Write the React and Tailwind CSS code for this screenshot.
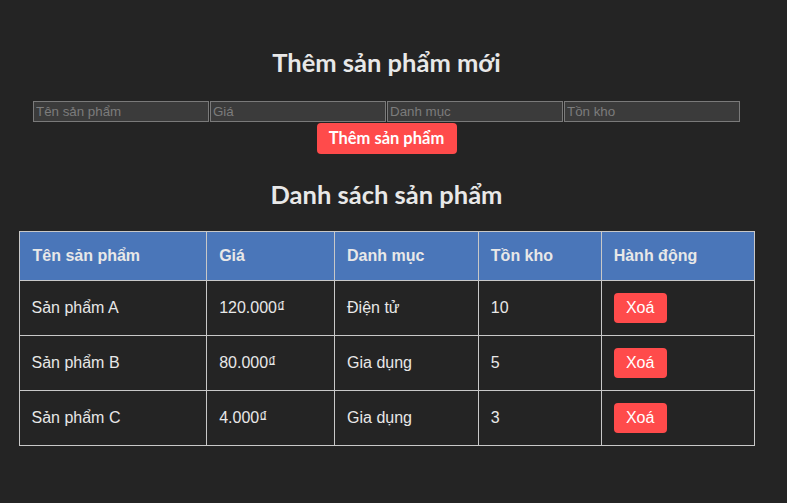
import React from 'react';

const products = [
  { name: 'Sản phẩm A', price: '120.000₫', category: 'Điện tử', stock: 10 },
  { name: 'Sản phẩm B', price: '80.000₫', category: 'Gia dụng', stock: 5 },
  { name: 'Sản phẩm C', price: '4.000₫', category: 'Gia dụng', stock: 3 },
];

const heading = "font-['Lato',sans-serif] font-bold text-[25.5px] leading-[36px] text-[#e8e8e8] text-center";

export default function App() {
  return (
    <div className="min-h-[503px] w-full bg-[#242424] text-[#e8e8e8] font-['Liberation_Sans',Arial,sans-serif]">
      <div className="w-[773px] flex flex-col items-center pt-[44px]">
        <h2 className={heading}>Thêm sản phẩm mới</h2>

        {/* Form */}
        <div className="mt-[21px] flex gap-px">
          {['Tên sản phẩm', 'Giá', 'Danh mục', 'Tồn kho'].map((p) => (
            <input
              key={p}
              placeholder={p}
              className="w-[176px] h-[21px] px-[2px] bg-[#3b3b3b] border border-[#7a7a7a] text-[13.33px] text-[#ddd] placeholder:text-[#7c7c7c] outline-none"
            />
          ))}
        </div>
        <button className="mt-[1px] w-[140px] h-[31px] rounded-[4px] bg-[#ff4b4b] text-white font-['Lato',sans-serif] font-bold text-[16.5px]">
          Thêm sản phẩm
        </button>

        <h2 className={`${heading} mt-[22px]`}>Danh sách sản phẩm</h2>

        {/* Table */}
        <table className="mt-[19px] w-[736px] border-collapse text-[16px]">
          <thead>
            <tr className="bg-[#4a76b9] h-[49px] text-left">
              <th className="w-[188px] border border-[#c8c8c8] px-[13px] font-bold">Tên sản phẩm</th>
              <th className="w-[128px] border border-[#c8c8c8] px-[12px] font-bold">Giá</th>
              <th className="w-[144px] border border-[#c8c8c8] px-[12px] font-bold">Danh mục</th>
              <th className="w-[123px] border border-[#c8c8c8] px-[12px] font-bold">Tồn kho</th>
              <th className="w-[153px] border border-[#c8c8c8] px-[12px] font-bold">Hành động</th>
            </tr>
          </thead>
          <tbody>
            {products.map((p) => (
              <tr key={p.name} className="h-[55px]">
                <td className="border border-[#c8c8c8] px-[12px]">{p.name}</td>
                <td className="border border-[#c8c8c8] px-[12px]">{p.price}</td>
                <td className="border border-[#c8c8c8] px-[12px]">{p.category}</td>
                <td className="border border-[#c8c8c8] px-[12px]">{p.stock}</td>
                <td className="border border-[#c8c8c8] px-[12px]">
                  <button className="w-[53px] h-[30px] rounded-[4px] bg-[#ff4b4b] text-white text-[16px]">Xoá</button>
                </td>
              </tr>
            ))}
          </tbody>
        </table>
      </div>
    </div>
  );
}
